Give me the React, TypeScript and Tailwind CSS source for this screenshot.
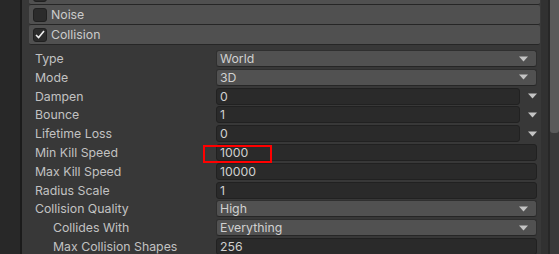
type Kind = "dropdown" | "number" | "curve";

const rows: { label: string; value: string; kind: Kind; indent?: boolean }[] = [
  { label: "Type", value: "World", kind: "dropdown" },
  { label: "Mode", value: "3D", kind: "dropdown" },
  { label: "Dampen", value: "0", kind: "curve" },
  { label: "Bounce", value: "1", kind: "curve" },
  { label: "Lifetime Loss", value: "0", kind: "curve" },
  { label: "Min Kill Speed", value: "1000", kind: "number" },
  { label: "Max Kill Speed", value: "10000", kind: "number" },
  { label: "Radius Scale", value: "1", kind: "number" },
  { label: "Collision Quality", value: "High", kind: "dropdown" },
  { label: "Collides With", value: "Everything", kind: "dropdown", indent: true },
  { label: "Max Collision Shapes", value: "256", kind: "number", indent: true },
];

function Arrow() {
  return (
    <svg width="9" height="6" viewBox="0 0 9 6" className="shrink-0">
      <path d="M0 0.5 L9 0.5 L4.5 5.5 Z" fill="#c4c4c4" />
    </svg>
  );
}

function Check() {
  return (
    <svg width="10" height="9" viewBox="0 0 10 9">
      <path d="M1 5 L3.6 7.5 L9 1" fill="none" stroke="#f0f0f0" strokeWidth="1.6" />
    </svg>
  );
}

function ModuleHeader({ title, checked }: { title: string; checked?: boolean }) {
  return (
    <div className="h-[20px] flex items-center gap-[4px] pl-[4px] bg-[#505050] border-b border-[#262626] rounded-[2px]">
      <div className="w-[14px] h-[14px] rounded-[3px] bg-[#2b2b2b] border border-[#202020] flex items-center justify-center">
        {checked && <Check />}
      </div>
      <span className="text-[12.3px] leading-[16px] text-[#cbcbcb]">{title}</span>
    </div>
  );
}

function Field({ value, kind }: { value: string; kind: Kind }) {
  if (kind === "dropdown") {
    return (
      <div className="h-[17px] flex items-center justify-between pl-[3px] pr-[8px] rounded-[3px] bg-[#515151] border border-[#2f2f2f] border-b-[#262626]">
        <span className="text-[#d0d0d0]">{value}</span>
        <Arrow />
      </div>
    );
  }
  if (kind === "curve") {
    return (
      <div className="h-[17px] flex items-center">
        <div className="flex-1 h-full flex items-center pl-[3px] rounded-[3px] bg-[#2a2a2a] border border-[#212121]">
          <span className="text-[#d0d0d0]">{value}</span>
        </div>
        <div className="w-[17px] flex justify-end">
          <Arrow />
        </div>
      </div>
    );
  }
  return (
    <div className="h-[17px] flex items-center pl-[3px] rounded-[3px] bg-[#2a2a2a] border border-[#212121]">
      <span className="text-[#d0d0d0]">{value}</span>
    </div>
  );
}

export default function App() {
  return (
    <div
      className="w-[559px] h-[254px] overflow-hidden flex bg-[#383838] text-[12.3px] leading-[15px]"
      style={{ fontFamily: "Inter, 'Liberation Sans', sans-serif" }}
    >
      <div className="w-[20px] bg-[#282828]" />
      <div className="w-[2px] bg-[#1b1b1b]" />

      <div className="flex-1 flex flex-col relative">
        {/* module headers */}
        <div className="mt-[-15px] pl-[7px] pr-[1px] flex flex-col">
          <ModuleHeader title="External Forces" />
          <ModuleHeader title="Noise" />
          <ModuleHeader title="Collision" checked />
        </div>

        {/* properties */}
        <div className="mt-[5px] pl-[13px] pr-[4px] flex flex-col gap-[1.8px]">
          {rows.map((r) => (
            <div key={r.label} className="h-[17px] grid grid-cols-[181px_1fr] items-center">
              <span className={`text-[#c2c2c2] whitespace-nowrap ${r.indent ? "pl-[18px]" : ""}`}>
                {r.label}
              </span>
              <Field value={r.value} kind={r.kind} />
            </div>
          ))}
        </div>

        {/* annotation */}
        <div className="absolute left-[181px] top-[145px] w-[69px] h-[18px] border-2 border-[#ff0000]" />
      </div>

      <div className="w-[7px] bg-[#313131]" />
      <div className="w-[2px] bg-[#272727]" />
      <div className="w-[9px] bg-[#393939]">
        <div className="h-[133px] bg-[#5a5a5a] rounded-b-[3px]" />
      </div>
    </div>
  );
}
